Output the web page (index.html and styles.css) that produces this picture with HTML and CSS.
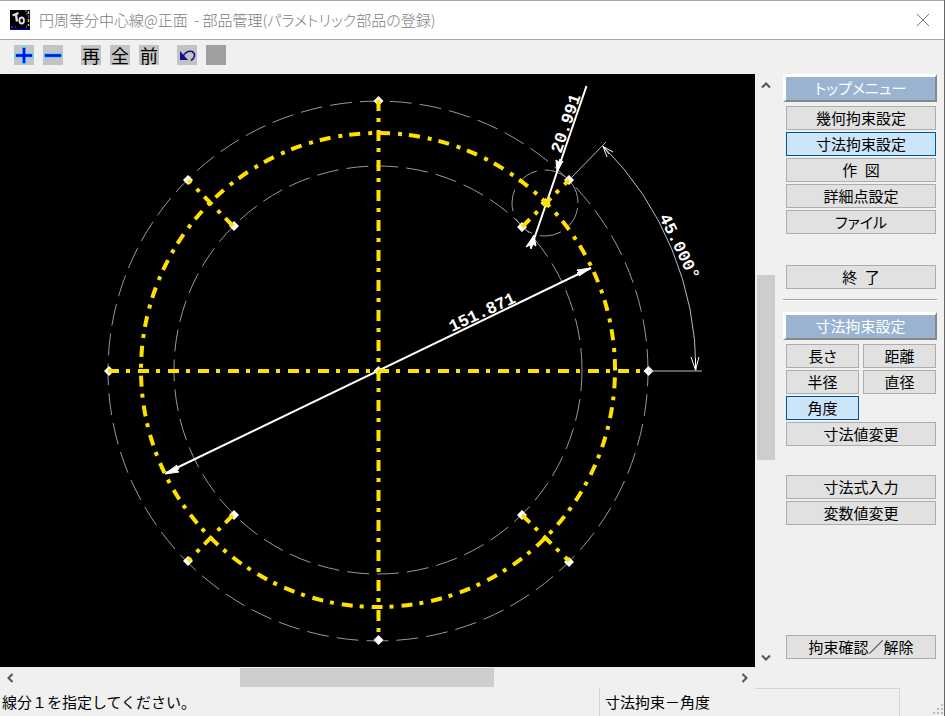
FILE: index.html
```html
<!DOCTYPE html>
<html lang="ja">

<head>
    <meta charset="UTF-8">
    <meta name="viewport" content="width=device-width, initial-scale=1.0">
    <title>部品管理(パラメトリック部品の登録)</title>
    <link rel="stylesheet" href="styles.css">
</head>

<body>
    <!-- タイトルバー -->
    <header class="titlebar">
        <svg class="app-icon" width="20" height="20" viewBox="0 0 20 20" aria-hidden="true">
            <rect width="20" height="20" fill="#000"/>
            <path d="M0 19.5h20" stroke="#0000e0"/>
            <path d="M18.5 1v3M18.5 9v3M18.5 14v2" stroke="#e8c040" stroke-width="1.5"/>
            <path d="M18.5 5v3M16.5 16v2M1 17h2M5 17h1" stroke="#3060ff"/>
            <path d="M17 3v2M15 1h2" stroke="#20d0c0"/>
            <path d="M2.5 5.5L8.5 3M6 4.5l1 7" stroke="#ddd" stroke-width="2.4" fill="none"/>
            <ellipse cx="11.7" cy="10.5" rx="2.3" ry="3" stroke="#ddd" stroke-width="1.8" fill="none"/>
        </svg>
        <h1 class="kana">円周等分中心線@正面&nbsp; - 部品管理(パラメトリック部品の登録)</h1>
        <button class="close" type="button" aria-label="閉じる">
            <svg width="12" height="12" viewBox="0 0 12 12"><path d="M0 0L12 12M12 0L0 12" stroke="#777" fill="none"/></svg>
        </button>
    </header>

    <!-- ツールバー -->
    <nav class="toolbar">
        <div class="tools">
            <button type="button" aria-label="拡大">
                <svg width="20" height="20" viewBox="0 0 20 20"><path d="M1 10.5h18M10 2v17" stroke="#00e4ff" stroke-width="4"/><path d="M2 10.5h16M10 3v15" stroke="#0000f0" stroke-width="2.500"/></svg>
            </button>
            <button type="button" aria-label="縮小">
                <svg width="20" height="20" viewBox="0 0 20 20"><path d="M1 10.5h18" stroke="#00e4ff" stroke-width="4"/><path d="M2 10.5h16" stroke="#0000f0" stroke-width="2.500"/></svg>
            </button>
        </div>
        <div class="tools">
            <button type="button">再</button>
            <button type="button">全</button>
            <button type="button">前</button>
        </div>
        <div class="tools">
            <button type="button" aria-label="元に戻す">
                <svg width="20" height="20" viewBox="0 0 20 20"><path d="M3 6v9h8z" fill="#101090"/><path d="M6 11C9 6.500 12 5.500 15 6.500C19 8.500 18 13 14 15.500" stroke="#101090" stroke-width="1.5" fill="none"/></svg>
            </button>
            <button class="blank" type="button" aria-label="停止"></button>
        </div>
    </nav>

    <main>
        <!-- 作図領域 -->
        <section class="drawing">
            <svg viewBox="0 74 755 592" preserveAspectRatio="xMinYMin meet">
                <!-- 基準円 -->
                <g class="thin dashed">
                    <path d="M648 371A270 270 0 0 0 108 371A270 270 0 0 0 648 371"/>
                    <path d="M582 370A204 204 0 0 0 174 370A204 204 0 0 0 582 370"/>
                    <path d="M578 203A33 33 0 0 0 512 203A33 33 0 0 0 578 203"/>
                </g>
                <!-- 端点 -->
                <g class="points">
                    <path d="M378.500 96l5 5l-5 5l-5-5z"/>
                    <path d="M378.500 635l5 5l-5 5l-5-5z"/>
                    <path d="M109 366l5 5l-5 5l-5-5z"/>
                    <path d="M648.500 366l5 5l-5 5l-5-5z"/>
                    <path d="M378.500 366l5 5l-5 5l-5-5z"/>
                    <path d="M188 175l5 5l-5 5l-5-5z"/>
                    <path d="M234 221l5 5l-5 5l-5-5z"/>
                    <path d="M569 175l5 5l-5 5l-5-5z"/>
                    <path d="M522 222l5 5l-5 5l-5-5z"/>
                    <path d="M545.500 198l5 5l-5 5l-5-5z"/>
                    <path d="M234 510l5 5l-5 5l-5-5z"/>
                    <path d="M188 556l5 5l-5 5l-5-5z"/>
                    <path d="M522 510l5 5l-5 5l-5-5z"/>
                    <path d="M569 557l5 5l-5 5l-5-5z"/>
                </g>
                <!-- 寸法線 -->
                <g class="dimension">
                    <path d="M166 473L591 268"/>
                    <path d="M586.500 86L532 245"/>
                </g>
                <g class="arrows">
                    <path d="M165 474l12-9l-1 3l3 0l-2 3l2 1z"/>
                    <path d="M591 268l-14 2l2 2l-2 1l3 0l-1 3z"/>
                    <path d="M557 172l-1-12l3 2l1-3l0 4l3-2z"/>
                    <path d="M534 235l-8 12l4-2l1 4l2-5l3 2z"/>
                </g>
                <g class="thin">
                    <path d="M648 371H702"/>
                    <path d="M571 178L606 142"/>
                    <path d="M603 146A318 318 0 0 1 696 371"/>
                    <path class="arrow-line" d="M607 157L603 146.500L613 152M603 146.500L609 154M691 357L695.500 370L699 357M695.500 370V358"/>
                </g>
                <!-- 中心線 -->
                <g class="center">
                    <path d="M378.500 100V640"/>
                    <path d="M108 371H648"/>
                    <path d="M615 370A237 237 0 0 0 141 370A237 237 0 0 0 615 370"/>
                    <path d="M233 226L188 180"/>
                    <path d="M522 227L569 180"/>
                    <path d="M233 515L188 561"/>
                    <path d="M522 515L569 561"/>
                </g>
                <!-- 寸法値 -->
                <g class="values">
                    <text transform="translate(452 332) rotate(-25)">151.871</text>
                    <text transform="translate(561 154) rotate(-71)">20.991</text>
                    <text transform="translate(659 217) rotate(64)">45.000°</text>
                </g>
            </svg>
        </section>

        <div class="scroll scroll-v">
            <button type="button" aria-label="上へ"><svg width="10" height="8" viewBox="0 0 10 8"><path d="M1 6.500L5 2.500L9 6.500"/></svg></button>
            <div class="track"><div class="thumb"></div></div>
            <button type="button" aria-label="下へ"><svg width="10" height="8" viewBox="0 0 10 8"><path d="M1 1.500L5 5.500L9 1.500"/></svg></button>
        </div>

        <div class="scroll scroll-h">
            <button type="button" aria-label="左へ"><svg width="8" height="10" viewBox="0 0 8 10"><path d="M6.500 1L2.500 5L6.500 9"/></svg></button>
            <div class="track"><div class="thumb"></div></div>
            <button type="button" aria-label="右へ"><svg width="8" height="10" viewBox="0 0 8 10"><path d="M1.500 1L5.500 5L1.500 9"/></svg></button>
        </div>

        <!-- メニュー -->
        <aside class="side">
            <h2 class="kana">トップメニュー</h2>
            <div class="menu">
                <button type="button">幾何拘束設定</button>
                <button class="active" type="button">寸法拘束設定</button>
                <button type="button">作&emsp14;&emsp14;図</button>
                <button type="button">詳細点設定</button>
                <button class="kana" type="button">ファイル</button>
            </div>
            <div class="menu exit">
                <button type="button">終&emsp14;&emsp14;了</button>
            </div>
            <hr>
            <h2>寸法拘束設定</h2>
            <div class="menu pairs">
                <button class="kana" type="button">長さ</button>
                <button type="button">距離</button>
                <button type="button">半径</button>
                <button type="button">直径</button>
                <button class="active" type="button">角度</button>
                <button class="wide" type="button">寸法値変更</button>
            </div>
            <div class="menu input-menu">
                <button type="button">寸法式入力</button>
                <button type="button">変数値変更</button>
            </div>
            <div class="menu check">
                <button type="button">拘束確認／解除</button>
            </div>
        </aside>
    </main>

    <!-- ステータスバー -->
    <footer>
        <p class="message">線分１を指定してください。</p>
        <p class="mode">寸法拘束－角度</p>
        <div class="status-box"></div>
        <svg class="grip" width="12" height="12" viewBox="0 0 12 12" aria-hidden="true"><path d="M9 1h2M9 5h2M5 5h2M9 9h2M5 9h2M1 9h2" stroke="#bbb" stroke-width="2"/></svg>
    </footer>
</body>

</html>
```
FILE: styles.css
```css
/* 全体 */

* {
    box-sizing: border-box;
}

body {
    margin: 0;
    min-height: 100vh;
    display: flex;
    flex-direction: column;
    background-color: #f0f0f0;
    border-right: 1px solid #666;
    color: #000;
    font-family: "Noto Sans CJK JP", sans-serif;
    font-size: 15px;
    line-height: 20px;
}

button {
    margin: 0;
    padding: 0;
    border: none;
    background: none;
    color: inherit;
    font: inherit;
}

svg {
    display: block;
}

.kana {
    font-feature-settings: "palt";
}

/* タイトルバー */

.titlebar {
    display: flex;
    align-items: center;
    height: 40px;
    padding: 0 15px 0 10px;
    background-color: #fff;
    border-top: 1px solid #a5a5a5;
    border-bottom: 1px solid #a5a5a5;
}

.titlebar h1 {
    flex: 1;
    margin: 0 0 0 9px;
    color: #7c7c7c;
    font-size: 15px;
    font-weight: 300;
}

/* ツールバー */

.toolbar {
    display: flex;
    gap: 18px;
    height: 34px;
    padding: 5px 14px 0;
}

.tools {
    display: flex;
    gap: 9px;
}

.tools button {
    width: 20px;
    height: 20px;
    background-color: #c3c3c3;
    font-size: 18px;
}

.tools .blank {
    background-color: #a0a0a0;
}

/* 作図領域とスクロールバー */

main {
    flex: 1;
    display: grid;
    grid-template-columns: 1fr 28px 161px;
    grid-template-rows: 1fr 21px;
}

.drawing {
    background-color: #000;
    overflow: hidden;
}

.drawing svg {
    width: 100%;
    fill: none;
}

.thin {
    stroke: #bbb;
}

.dashed {
    stroke: #999;
    stroke-dasharray: 22 8;
}

.arrow-line {
    stroke: #fff;
}

.dimension {
    stroke: #fff;
    stroke-width: 2;
}

.points,
.arrows {
    fill: #fff;
}

.arrows {
    stroke: #fff;
}

.center {
    stroke: #ffe100;
    stroke-width: 4;
    stroke-dasharray: 11 7 4 8;
}

.values {
    fill: #fff;
    font-family: "Liberation Mono", monospace;
    font-size: 17px;
    font-weight: bold;
}

.scroll {
    display: flex;
}

.scroll path {
    stroke: #555;
    stroke-width: 2;
    fill: none;
}

.scroll button {
    flex: 0 0 20px;
    display: flex;
    align-items: center;
    justify-content: center;
}

.track {
    flex: 1;
}

.thumb {
    background-color: #cdcdcd;
}

.scroll-v {
    flex-direction: column;
    width: 20px;
    padding-left: 2px;
}

.scroll-v button {
    padding-top: 2px;
}

.scroll-v .track {
    padding-top: 181px;
}

.scroll-v .thumb {
    height: 185px;
}

.scroll-h {
    grid-row: 2;
    grid-column: 1;
    padding: 1px 0;
}

.scroll-h .track {
    padding-left: 220px;
}

.scroll-h .thumb {
    width: 254px;
    height: 19px;
}

/* メニュー */

.side {
    grid-column: 3;
    grid-row: 1 / 3;
    padding-right: 7px;
}

.side h2 {
    height: 28px;
    margin: 0;
    background-color: #9ab3d1;
    border: 3px solid #fff;
    border-right: 2px solid #888;
    border-bottom: 2px solid #888;
    color: #fff;
    font-size: 15px;
    font-weight: 400;
    line-height: 22px;
    text-align: center;
}

.menu {
    display: grid;
    gap: 2px;
    margin-top: 4px;
    padding: 0 1px 0 3px;
}

.menu button {
    height: 24px;
    background-color: #e1e1e1;
    border: 1px solid #adadad;
    line-height: 20px;
}

.menu .active {
    background-color: #cce4f7;
    border-color: #005499;
}

.pairs {
    grid-template-columns: 1fr 1fr;
    column-gap: 4px;
}

.pairs .wide {
    grid-column: 1 / 3;
}

.exit {
    margin-top: 31px;
}

.side hr {
    height: 2px;
    margin: 10px 0 11px;
    border: none;
    border-top: 1px solid #a5a5a5;
    border-bottom: 1px solid #fff;
}

.input-menu {
    margin-top: 29px;
}

.check {
    margin-top: 110px;
}

/* ステータスバー */

footer {
    display: flex;
    height: 28px;
}

footer p {
    margin: 0;
    padding-top: 4px;
}

.message {
    flex: 1;
    padding-left: 2px;
}

.mode {
    width: 156px;
    padding-left: 5px;
    border-left: 1px solid #d5d5d5;
}

.status-box {
    width: 145px;
    border: 1px solid #d5d5d5;
    border-width: 1px 1px 0 0;
}

.grip {
    align-self: flex-end;
    margin-left: 32px;
}
```
